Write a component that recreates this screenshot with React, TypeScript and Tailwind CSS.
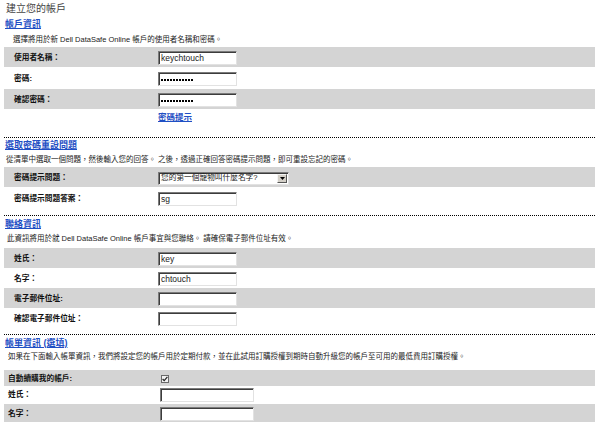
import type { ReactNode } from 'react';

interface RowProps {
  label: string;
  gray?: boolean;
  className: string;
  children?: ReactNode;
}

function Row({ label, gray, className, children }: RowProps) {
  return (
    <div className={`flex items-center pt-[2px] ${gray ? 'bg-[#d4d4d4]' : ''} ${className}`}>
      <span className="w-[154px] shrink-0 pl-[10px] text-[7.7px] font-bold text-[#111]">{label}</span>
      {children}
    </div>
  );
}

function BillRow({ label, gray, className, children }: RowProps) {
  return (
    <div className={`flex items-center pt-[1px] ${gray ? 'bg-[#d4d4d4]' : ''} ${className}`}>
      <span className="w-[156px] shrink-0 pl-[4px] text-[7.7px] font-bold text-[#111]">{label}</span>
      {children}
    </div>
  );
}

const boxCls =
  'h-[14px] bg-white border border-t-[#7b7b7b] border-l-[#7b7b7b] border-r-[#e2e2e2] border-b-[#e2e2e2] shadow-[inset_1px_1px_0_#3c3c3c]';

function TextBox({ value = '', wide }: { value?: string; wide?: boolean }) {
  return (
    <input
      readOnly
      type="text"
      value={value}
      className={`${wide ? 'w-[94px]' : 'w-[79px]'} ${boxCls} pl-[2px] text-[8.5px] text-[#222] leading-none outline-none font-['Liberation_Sans',sans-serif]`}
    />
  );
}

// masked password field: 11 dots
function PasswordBox() {
  return (
    <div className={`w-[79px] ${boxCls} flex items-center gap-[1px] pl-[2px] pt-px`}>
      {Array.from({ length: 11 }).map((_, i) => (
        <span key={i} className="w-[2px] h-[2px] bg-black" />
      ))}
    </div>
  );
}

function SectionLink({ children, className }: { children: ReactNode; className: string }) {
  return (
    <div className={`h-[12px] flex items-center pl-[1px] ${className}`}>
      <a className="text-[9px] font-bold text-[#1f4fc4] underline underline-offset-[1px]">{children}</a>
    </div>
  );
}

function Desc({ children, className }: { children: ReactNode; className: string }) {
  return (
    <div className={`h-[12px] flex items-center text-[7.5px] text-[#222] whitespace-nowrap ${className}`}>
      {children}
    </div>
  );
}

function Divider({ className }: { className: string }) {
  return <div className={`border-t border-dotted border-black ${className}`} />;
}

export default function App() {
  return (
    <div className="w-[600px] h-[425px] overflow-hidden bg-white pl-[4px] pr-[5px] font-['Liberation_Sans','Noto_Sans_CJK_TC',sans-serif]">
      <div className="h-[16px] flex items-center pl-[2px] text-[10px] text-[#444]">建立您的帳戶</div>

      {/* 帳戶資訊 */}
      <SectionLink className="mt-[3px]">帳戶資訊</SectionLink>
      <Desc className="mt-[3px] pl-[9px]">選擇將用於新 Dell DataSafe Online 帳戶的使用者名稱和密碼。</Desc>
      <div className="mt-[1px] flex flex-col gap-px">
        <Row label="使用者名稱：" gray className="h-[20px]">
          <TextBox value="keychtouch" />
        </Row>
        <Row label="密碼:" className="h-[20px]">
          <PasswordBox />
        </Row>
        <Row label="確認密碼：" gray className="h-[20px]">
          <PasswordBox />
        </Row>
      </div>
      <div className="mt-[2px] h-[12px] flex items-center pl-[154px]">
        <a className="text-[8.5px] font-bold text-[#1f4fc4] underline underline-offset-[1px]">密碼提示</a>
      </div>

      <Divider className="mt-[14px]" />

      {/* 密碼重設問題 */}
      <SectionLink className="mt-[2px]">選取密碼重設問題</SectionLink>
      <Desc className="mt-[2px] pl-[2px]">
        從清單中選取一個問題，然後輸入您的回答。 之後，透過正確回答密碼提示問題，即可重設忘記的密碼。
      </Desc>
      <div className="mt-[1px] flex flex-col gap-px">
        <Row label="密碼提示問題：" gray className="h-[20px]">
          <div className="w-[131px] h-[13px] flex items-stretch bg-white border border-t-[#7b7b7b] border-l-[#7b7b7b] border-r-[#e2e2e2] border-b-[#e2e2e2] shadow-[inset_1px_1px_0_#3c3c3c]">
            <span className="flex-1 flex items-center pl-[2px] text-[7.7px] text-[#222] leading-none">您的第一個寵物叫什麼名字?</span>
            <span className="w-[10px] my-[1px] mr-[1px] flex items-center justify-center bg-[#d4d0c8] border border-t-[#f4f4f4] border-l-[#f4f4f4] border-r-[#555] border-b-[#555]">
              <svg width="5" height="3" viewBox="0 0 5 3">
                <path d="M0 0h5L2.5 3z" fill="#000" />
              </svg>
            </span>
          </div>
        </Row>
        <Row label="密碼提示問題答案：" className="h-[20px]">
          <TextBox value="sg" />
        </Row>
      </div>

      <Divider className="mt-[7px]" />

      {/* 聯絡資訊 */}
      <SectionLink className="mt-[3px]">聯絡資訊</SectionLink>
      <Desc className="mt-[2px] pl-[3px]">
        此資訊將用於就 Dell DataSafe Online 帳戶事宜與您聯絡。 請確保電子郵件位址有效。
      </Desc>
      <div className="mt-[3px] flex flex-col">
        <Row label="姓氏：" gray className="h-[20px]">
          <TextBox value="key" />
        </Row>
        <Row label="名字：" className="h-[20px]">
          <TextBox value="chtouch" />
        </Row>
        <Row label="電子郵件位址:" gray className="h-[20px]">
          <TextBox />
        </Row>
        <Row label="確認電子郵件位址：" className="h-[20px]">
          <TextBox />
        </Row>
      </div>

      <Divider className="mt-[6px]" />

      {/* 帳單資訊 */}
      <SectionLink className="mt-[3px]">帳單資訊 (選填)</SectionLink>
      <Desc className="mt-[1px] pl-[4px]">
        如果在下面輸入帳單資訊，我們將設定您的帳戶用於定期付款，並在此試用訂購授權到期時自動升級您的帳戶至可用的最低費用訂購授權。
      </Desc>
      <div className="mt-[7px] flex flex-col">
        <BillRow label="自動續購我的帳戶:" gray className="h-[16px]">
          <span className="ml-[1px] w-[8px] h-[8px] flex items-center justify-center bg-[#f2f2f2] border border-[#6a6a6a]">
            <svg width="6" height="6" viewBox="0 0 6 6">
              <path d="M0.6 3l1.6 1.7L5.4 0.8" fill="none" stroke="#222" strokeWidth="1.2" />
            </svg>
          </span>
        </BillRow>
        <BillRow label="姓氏：" className="h-[17px]">
          <TextBox wide />
        </BillRow>
        <BillRow label="名字：" gray className="mt-px h-[18px]">
          <TextBox wide />
        </BillRow>
      </div>
    </div>
  );
}
